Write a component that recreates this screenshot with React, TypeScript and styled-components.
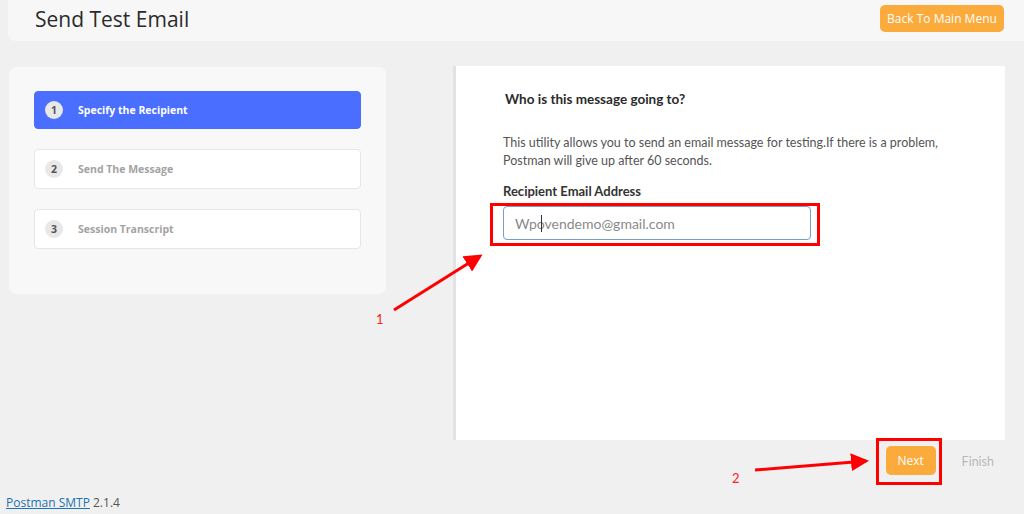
import React from "react";
import styled, { createGlobalStyle } from "styled-components";

const Global = createGlobalStyle`
  html, body { margin: 0; padding: 0; background: #f0f0f1; }
  body { font-family: "Lato", "Open Sans", sans-serif; width: 1024px; height: 514px; overflow: hidden; }
  * { box-sizing: border-box; }
`;

const Page = styled.div`
  position: relative;
  width: 1024px;
  height: 514px;
  display: flex;
  flex-direction: column;
`;

const Header = styled.header`
  margin-left: 8px;
  height: 41px;
  background: #f7f7f7;
  border-bottom-left-radius: 8px;
  display: flex;
  align-items: center;
  justify-content: space-between;
  padding: 0 20px 0 27px;
`;

const Title = styled.h1`
  margin: 0;
  font-family: "Open Sans", "Noto Sans", sans-serif;
  font-weight: 400;
  font-size: 21px;
  color: #2b2b2b;
  margin-top: -3px;
`;

const OrangeButton = styled.button<{ $w?: number; $h?: number }>`
  border: none;
  background: #fbaa3c;
  color: #fff;
  border-radius: 5px;
  font-family: "Open Sans", "Noto Sans", sans-serif;
  font-size: 12px;
  padding: 0 7px;
  height: ${(p) => p.$h ?? 27}px;
  width: ${(p) => (p.$w ? p.$w + "px" : "auto")};
  cursor: pointer;
`;

const HeaderButton = styled(OrangeButton)`
  margin-top: -5px;
  width: 124px;
`;

const Main = styled.div`
  display: flex;
  gap: 67px;
  margin-top: 25px;
  padding-left: 9px;
`;

const StepsCard = styled.div`
  width: 377px;
  height: 227px;
  margin-top: 1px;
  background: #f8f8f8;
  border-radius: 7px;
  padding: 24px 25px;
  display: flex;
  flex-direction: column;
  gap: 20px;
`;

const Step = styled.div<{ $active?: boolean }>`
  height: ${(p) => (p.$active ? 38 : 40)}px;
  border-radius: 4px;
  background: ${(p) => (p.$active ? "#4a6eff" : "#ffffff")};
  border: 1px solid ${(p) => (p.$active ? "#4a6eff" : "#e6e6e6")};
  display: flex;
  align-items: center;
  padding-left: 10px;
  gap: 15px;
  font-family: "Open Sans", "Noto Sans", sans-serif;
  font-weight: 700;
  font-size: 10.5px;
  color: ${(p) => (p.$active ? "#ffffff" : "#a3a3a3")};
`;

const StepNum = styled.span`
  width: 18px;
  height: 18px;
  border-radius: 50%;
  background: #e8e8e8;
  color: #555;
  display: flex;
  align-items: center;
  justify-content: center;
  font-size: 10.5px;
  font-weight: 700;
`;

const RightCol = styled.div`
  display: flex;
  flex-direction: column;
`;

const Panel = styled.section`
  width: 552px;
  height: 374px;
  background: #fff;
  border-left: 3px solid #e2e2e2;
  padding: 25px 0 0 47px;
  display: flex;
  flex-direction: column;
`;

const Question = styled.h3`
  margin: 0 0 0 2px;
  font-size: 13.5px;
  font-weight: 700;
  color: #2a2a2a;
  line-height: 17px;
`;

const Para = styled.p`
  margin: 26px 0 0 0;
  font-size: 12.5px;
  line-height: 18px;
  color: #555;
  width: 460px;
`;

const Label = styled.label`
  margin-top: 13px;
  font-size: 13px;
  font-weight: 700;
  color: #333;
  line-height: 16px;
`;

const InputWrap = styled.div`
  position: relative;
  margin-top: 7px;
  width: 308px;
`;

const Input = styled.input`
  width: 308px;
  height: 34px;
  border: 1px solid #7a9ccb;
  border-radius: 4px;
  padding: 0 11px;
  font-family: "Lato", sans-serif;
  font-size: 14px;
  color: #8a8a8a;
  outline: none;
`;

const Caret = styled.span`
  position: absolute;
  left: 38px;
  top: 9px;
  width: 1px;
  height: 17px;
  background: #333;
`;

const RedBox = styled.div<{ $l: number; $t: number; $w: number; $h: number }>`
  position: absolute;
  left: ${(p) => p.$l}px;
  top: ${(p) => p.$t}px;
  width: ${(p) => p.$w}px;
  height: ${(p) => p.$h}px;
  border: 3px solid #ff0000;
  pointer-events: none;
`;

const ButtonsRow = styled.div`
  display: flex;
  justify-content: flex-end;
  align-items: center;
  gap: 26px;
  margin-top: 6px;
  padding-right: 11px;
`;

const NextWrap = styled.div`
  position: relative;
  display: flex;
`;

const Finish = styled.span`
  font-size: 12.5px;
  color: #b8b8b8;
  font-family: "Lato", sans-serif;
  margin-top: 1px;
`;

const Footer = styled.footer`
  margin-top: auto;
  padding: 0 0 3px 6px;
  font-size: 12px;
  font-family: "Open Sans", "Noto Sans", sans-serif;
  color: #555;
`;

const Link = styled.a`
  color: #2271b1;
  text-decoration: underline;
`;

const Annot = styled.svg`
  position: absolute;
  left: 0;
  top: 0;
  pointer-events: none;
`;

const AnnotNum = styled.span<{ $x: number; $y: number }>`
  position: absolute;
  left: ${(p) => p.$x}px;
  top: ${(p) => p.$y}px;
  color: #ff2020;
  font-family: "Lato", sans-serif;
  font-size: 13px;
`;

export default function App() {
  return (
    <Page>
      <Global />
      <Header>
        <Title>Send Test Email</Title>
        <HeaderButton>Back To Main Menu</HeaderButton>
      </Header>
      <Main>
        <StepsCard>
          <Step $active>
            <StepNum>1</StepNum>
            Specify the Recipient
          </Step>
          <Step>
            <StepNum>2</StepNum>
            Send The Message
          </Step>
          <Step>
            <StepNum>3</StepNum>
            Session Transcript
          </Step>
        </StepsCard>
        <RightCol>
          <Panel>
            <Question>Who is this message going to?</Question>
            <Para>
              This utility allows you to send an email message for testing.If there is a problem,
              Postman will give up after 60 seconds.
            </Para>
            <Label>Recipient Email Address</Label>
            <InputWrap>
              <Input defaultValue="Wpovendemo@gmail.com" />
              <Caret />
              <RedBox $l={-13} $t={-3} $w={330} $h={43} />
            </InputWrap>
          </Panel>
          <ButtonsRow>
            <NextWrap>
              <OrangeButton $w={50} $h={29}>Next</OrangeButton>
              <RedBox $l={-10} $t={-8} $w={66} $h={47} />
            </NextWrap>
            <Finish>Finish</Finish>
          </ButtonsRow>
        </RightCol>
      </Main>
      <Footer>
        <Link href="#">Postman SMTP</Link> 2.1.4
      </Footer>
      <Annot width="1024" height="514" viewBox="0 0 1024 514">
        <defs>
          <marker id="ah" markerWidth="6" markerHeight="6" refX="5" refY="3" orient="auto" markerUnits="strokeWidth">
            <path d="M0,0 L6,3 L0,6 Z" fill="#ff0000" />
          </marker>
        </defs>
        <line x1="394" y1="310" x2="480" y2="256" stroke="#ff0000" strokeWidth="3" markerEnd="url(#ah)" />
        <line x1="755" y1="470" x2="866" y2="461" stroke="#ff0000" strokeWidth="3" markerEnd="url(#ah)" />
      </Annot>
      <AnnotNum $x={376} $y={311}>1</AnnotNum>
      <AnnotNum $x={732} $y={470}>2</AnnotNum>
    </Page>
  );
}
